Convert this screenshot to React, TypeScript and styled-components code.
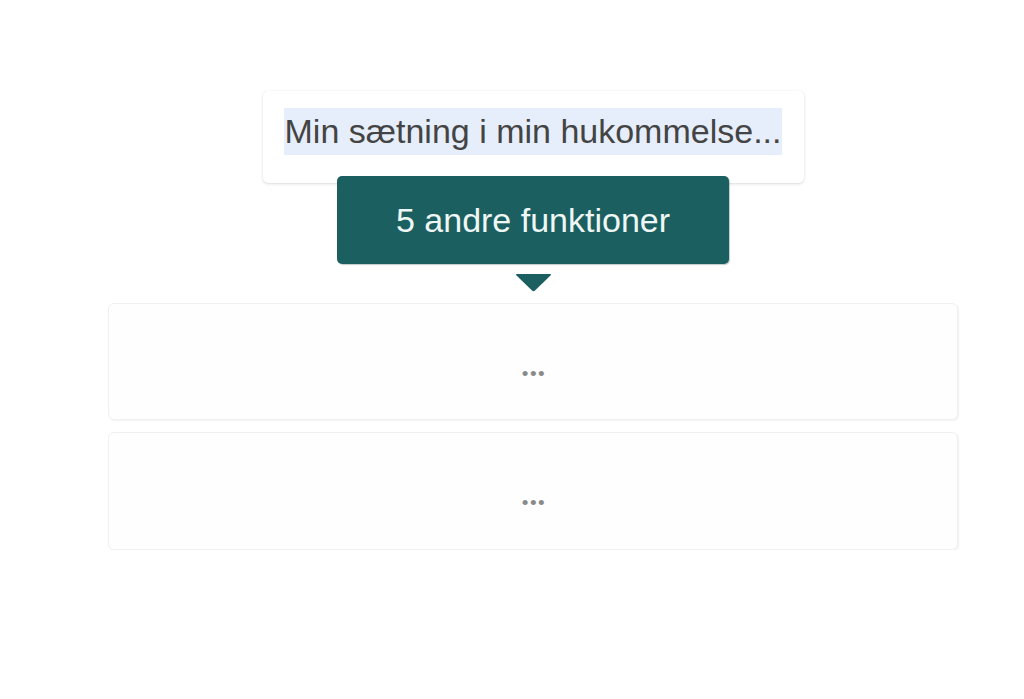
import { createGlobalStyle, styled } from "styled-components";

const GlobalStyle = createGlobalStyle`
  html, body {
    margin: 0;
    padding: 0;
    background: #ffffff;
  }
  body {
    font-family: "Liberation Sans", Arial, sans-serif;
  }
`;

const Page = styled.div`
  width: 850px;
  margin-left: 108px;
  padding-top: 91px;
  display: flex;
  flex-direction: column;
  align-items: center;
`;

const PhraseCard = styled.div`
  width: 541px;
  height: 92px;
  box-sizing: border-box;
  background: #ffffff;
  border-radius: 5px;
  box-shadow: 0 1px 3px rgba(0, 0, 0, 0.14), 0 0 1px rgba(0, 0, 0, 0.08);
  display: flex;
  align-items: flex-start;
  justify-content: center;
  padding-top: 17px;
`;

const Highlight = styled.span`
  display: inline-block;
  background: #e6eefb;
  color: #444444;
  font-size: 34px;
  line-height: 47px;
  padding: 0 1px;
`;

const ActionButton = styled.button`
  position: relative;
  margin-top: -7px;
  width: 392px;
  height: 88px;
  border: none;
  border-radius: 5px;
  background: #1b5f60;
  color: #eef7f5;
  font-family: "Liberation Sans", Arial, sans-serif;
  font-size: 34px;
  box-shadow: 1px 1px 1px rgba(0, 40, 40, 0.25);
  cursor: pointer;
`;

const Caret = styled.svg`
  display: block;
  margin-top: 10px;
  margin-bottom: 11px;
`;

const List = styled.div`
  align-self: stretch;
  display: flex;
  flex-direction: column;
  gap: 12px;
`;

const Placeholder = styled.div<{ $h: number }>`
  height: ${(p) => p.$h}px;
  box-sizing: border-box;
  background: #fefefe;
  border: 1px solid #f0f0f0;
  border-radius: 6px;
  box-shadow: 1px 1px 2px rgba(0, 0, 0, 0.06);
  display: flex;
  justify-content: center;
  padding-top: 58px;
`;

const Dots = styled.span`
  color: #8a8a8a;
  font-size: 19px;
  line-height: 24px;
  letter-spacing: 1.5px;
  margin-left: 2px;
`;

export default function App() {
  return (
    <>
      <GlobalStyle />
      <Page>
        <PhraseCard>
          <Highlight>Min sætning i min hukommelse...</Highlight>
        </PhraseCard>
        <ActionButton>5 andre funktioner</ActionButton>
        <Caret width="37" height="18" viewBox="0 0 37 18">
          <path d="M2 0 H35 Q37 0 35.5 1.5 L20 16.5 Q18.5 18 17 16.5 L1.5 1.5 Q0 0 2 0 Z" fill="#1b5f60" />
        </Caret>
        <List>
          <Placeholder $h={117}>
            <Dots>•••</Dots>
          </Placeholder>
          <Placeholder $h={118}>
            <Dots>•••</Dots>
          </Placeholder>
        </List>
      </Page>
    </>
  );
}
